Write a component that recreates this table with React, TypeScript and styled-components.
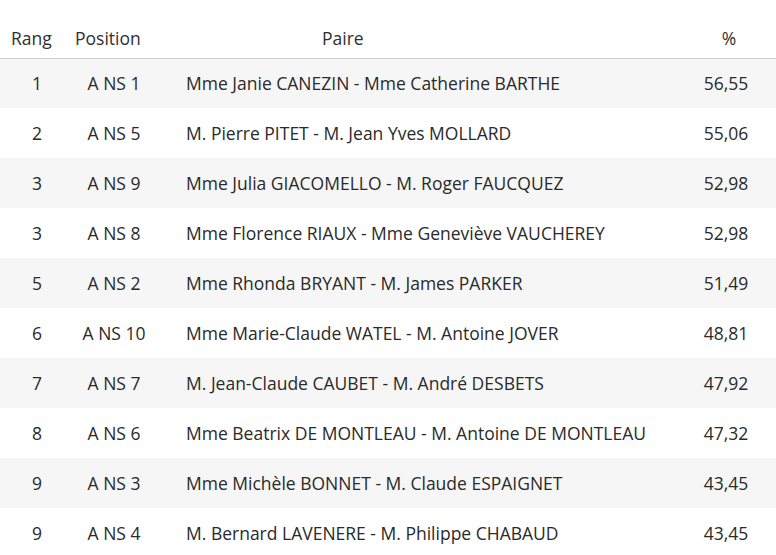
import React from 'react';
import styled, { createGlobalStyle } from 'styled-components';

interface Result {
  rang: number;
  position: string;
  paire: string;
  pct: string;
}

const results: Result[] = [
  { rang: 1, position: 'A NS 1', paire: 'Mme Janie CANEZIN - Mme Catherine BARTHE', pct: '56,55' },
  { rang: 2, position: 'A NS 5', paire: 'M. Pierre PITET - M. Jean Yves MOLLARD', pct: '55,06' },
  { rang: 3, position: 'A NS 9', paire: 'Mme Julia GIACOMELLO - M. Roger FAUCQUEZ', pct: '52,98' },
  { rang: 3, position: 'A NS 8', paire: 'Mme Florence RIAUX - Mme Geneviève VAUCHEREY', pct: '52,98' },
  { rang: 5, position: 'A NS 2', paire: 'Mme Rhonda BRYANT - M. James PARKER', pct: '51,49' },
  { rang: 6, position: 'A NS 10', paire: 'Mme Marie-Claude WATEL - M. Antoine JOVER', pct: '48,81' },
  { rang: 7, position: 'A NS 7', paire: 'M. Jean-Claude CAUBET - M. André DESBETS', pct: '47,92' },
  { rang: 8, position: 'A NS 6', paire: 'Mme Beatrix DE MONTLEAU - M. Antoine DE MONTLEAU', pct: '47,32' },
  { rang: 9, position: 'A NS 3', paire: 'Mme Michèle BONNET - M. Claude ESPAIGNET', pct: '43,45' },
  { rang: 9, position: 'A NS 4', paire: 'M. Bernard LAVENERE - M. Philippe CHABAUD', pct: '43,45' },
];

const App: React.FC = () => {
  return (
    <>
      <GlobalStyle />
      <ResultsTable>
        <colgroup>
          <col style={{ width: 74 }} />
          <col style={{ width: 80 }} />
          <col style={{ width: 534 }} />
          <col style={{ width: 88 }} />
        </colgroup>
        <thead>
          <tr>
            <HeadCell $align="left" $pad="0 0 0 11px">Rang</HeadCell>
            <HeadCell $align="left" $pad="0 0 0 1px">Position</HeadCell>
            <HeadCell $align="left" $pad="0 0 0 168px">Paire</HeadCell>
            <HeadCell $align="center" $pad="0 6px 0 0">%</HeadCell>
          </tr>
        </thead>
        <tbody>
          {results.map((r, i) => (
            <ResultRow key={i} $striped={i % 2 === 0}>
              <Cell $align="center">{r.rang}</Cell>
              <Cell $align="center">{r.position}</Cell>
              <Cell $align="left" $pad="0 0 0 32px">{r.paire}</Cell>
              <Cell $align="center" $pad="0 12px 0 0">{r.pct}</Cell>
            </ResultRow>
          ))}
        </tbody>
      </ResultsTable>
    </>
  );
};

export default App;

const GlobalStyle = createGlobalStyle`
  body {
    margin: 0;
    background: #fff;
    font-family: "Open Sans", "Noto Sans", sans-serif;
    color: #333;
  }
`;

const ResultsTable = styled.table`
  width: 776px;
  border-collapse: collapse;
  table-layout: fixed;
  font-size: 17.5px;
`;

const HeadCell = styled.th<{ $align: string; $pad: string }>`
  height: 58px;
  box-sizing: border-box;
  vertical-align: bottom;
  padding: ${(p) => p.$pad};
  padding-bottom: 9px;
  text-align: ${(p) => p.$align};
  font-weight: 400;
  line-height: 22px;
  color: #2f2f2f;
  border-bottom: 1px solid #cfcfcf;
  white-space: nowrap;
`;

const ResultRow = styled.tr<{ $striped: boolean }>`
  background: ${(p) => (p.$striped ? '#f6f6f6' : '#fff')};
`;

const Cell = styled.td<{ $align: string; $pad?: string }>`
  height: 50px;
  box-sizing: border-box;
  padding: ${(p) => p.$pad ?? '0'};
  text-align: ${(p) => p.$align};
  vertical-align: middle;
  line-height: 22px;
  white-space: nowrap;
  color: #2a2a2a;
`;
